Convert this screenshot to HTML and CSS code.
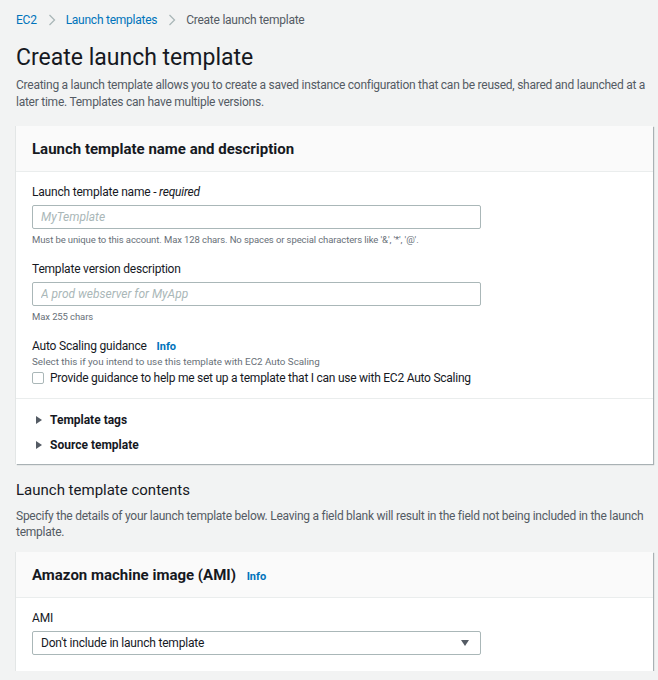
FILE: index.html
```html
<!DOCTYPE html>
<html lang="en">
<head>
    <meta charset="UTF-8" />
    <title>Create launch template</title>
    <link rel="stylesheet" href="styles.css">
</head>
<body>
    <main class="page">
        <nav class="breadcrumbs">
            <a href="#">EC2</a>
            <svg class="crumb-sep" width="8" height="12" viewBox="0 0 8 12"><path d="M1.5 1l5 5-5 5" fill="none" stroke="#aab7b8" stroke-width="1.3"/></svg>
            <a href="#">Launch templates</a>
            <svg class="crumb-sep" width="8" height="12" viewBox="0 0 8 12"><path d="M1.5 1l5 5-5 5" fill="none" stroke="#aab7b8" stroke-width="1.3"/></svg>
            <span class="crumb-current">Create launch template</span>
        </nav>

        <h1 class="page-title">Create launch template</h1>
        <p class="page-desc">Creating a launch template allows you to create a saved instance configuration that can be reused, shared and launched at a later time. Templates can have multiple versions.</p>

        <section class="card">
            <div class="card-header">
                <h2>Launch template name and description</h2>
            </div>
            <div class="card-body">
                <div class="field">
                    <label class="field-label">Launch template name - <i>required</i></label>
                    <input class="text-input" type="text" placeholder="MyTemplate">
                    <div class="field-hint">Must be unique to this account. Max 128 chars. No spaces or special characters like '&amp;', '*', '@'.</div>
                </div>
                <div class="field">
                    <label class="field-label">Template version description</label>
                    <input class="text-input" type="text" placeholder="A prod webserver for MyApp">
                    <div class="field-hint">Max 255 chars</div>
                </div>
                <div class="field field-last">
                    <label class="field-label">Auto Scaling guidance <a class="info" href="#">Info</a></label>
                    <div class="field-hint hint-top">Select this if you intend to use this template with EC2 Auto Scaling</div>
                    <label class="checkbox-row">
                        <span class="checkbox"></span>
                        Provide guidance to help me set up a template that I can use with EC2 Auto Scaling
                    </label>
                </div>
            </div>
            <div class="card-expanders">
                <div class="expander"><span class="caret"></span>Template tags</div>
                <div class="expander"><span class="caret"></span>Source template</div>
            </div>
        </section>

        <h3 class="section-title">Launch template contents</h3>
        <p class="section-desc">Specify the details of your launch template below. Leaving a field blank will result in the field not being included in the launch template.</p>

        <section class="card">
            <div class="card-header">
                <h2>Amazon machine image (AMI) <a class="info" href="#">Info</a></h2>
            </div>
            <div class="card-body body-short">
                <label class="field-label">AMI</label>
                <div class="select">
                    <span>Don't include in launch template</span>
                    <span class="select-arrow"></span>
                </div>
            </div>
        </section>
    </main>
</body>
</html>
```

FILE: styles.css
```css
* {
    margin: 0;
    padding: 0;
    box-sizing: border-box;
}

body {
    font-family: Roboto, 'Noto Sans', sans-serif;
    background-color: #f2f3f3;
    color: #16191f;
}

.page {
    padding: 11px 0 0 16px;
    width: 658px;
}

.breadcrumbs {
    display: flex;
    align-items: center;
    font-size: 12px;
    letter-spacing: -0.25px;
    height: 18px;
}

.breadcrumbs a {
    color: #0073bb;
    text-decoration: none;
}

.crumb-sep {
    margin: 0 10px 0 11px;
}

.crumb-current {
    color: #545b64;
}

.page-title {
    font-size: 23px;
    font-weight: 400;
    margin-top: 13px;
    line-height: 32px;
}

.page-desc,
.section-desc {
    font-size: 12px;
    letter-spacing: -0.25px;
    color: #545b64;
    line-height: 17px;
    margin-top: 3px;
    width: 642px;
}

.card {
    width: 637px;
    background: #fff;
    margin-top: 15px;
    box-shadow: 1px 1px 1px 0 rgba(0, 28, 36, 0.3), -1px 0 0 0 rgba(0, 28, 36, 0.06);
}

.card-header {
    background: #fafafa;
    border-bottom: 1px solid #eaeded;
    padding: 0 16px;
    height: 46px;
    display: flex;
    align-items: center;
}

.card-header h2 {
    font-size: 15px;
    font-weight: 700;
}

.info {
    color: #0073bb;
    font-size: 11px;
    font-weight: 700;
    letter-spacing: 0;
    text-decoration: none;
    margin-left: 7px;
}

.card-body {
    padding: 12px 16px 11px;
    border-bottom: 1px solid #eaeded;
}

.field {
    margin-bottom: 15px;
}

.field-last {
    margin-bottom: 0;
}

.field-label {
    display: block;
    font-size: 12px;
    letter-spacing: -0.2px;
    line-height: 16px;
    margin-bottom: 5px;
}

.text-input {
    display: block;
    width: 449px;
    height: 24px;
    border: 1px solid #aab7b8;
    border-radius: 2px;
    padding: 0 8px;
    font-family: inherit;
    font-size: 12px;
}

.text-input::placeholder {
    color: #aab7b8;
    font-style: italic;
}

.field-hint {
    font-size: 9.5px;
    letter-spacing: -0.1px;
    color: #687078;
    margin-top: 4px;
    line-height: 13px;
}

.hint-top {
    margin-top: -5px;
    font-size: 9.8px;
    letter-spacing: 0;
}

.checkbox-row {
    display: flex;
    align-items: center;
    font-size: 12px;
    letter-spacing: -0.25px;
    margin-top: 1px;
    line-height: 18px;
}

.checkbox {
    width: 12px;
    height: 12px;
    border: 1px solid #aab7b8;
    border-radius: 2px;
    margin-right: 6px;
}

.card-expanders {
    padding: 8px 16px 7px 20px;
}

.expander {
    display: flex;
    align-items: center;
    font-size: 12px;
    font-weight: 700;
    color: #16191f;
    height: 25px;
}

.caret {
    width: 0;
    height: 0;
    border-top: 4px solid transparent;
    border-bottom: 4px solid transparent;
    border-left: 6px solid #545b64;
    margin-right: 8px;
}

.section-title {
    font-size: 15px;
    font-weight: 400;
    margin-top: 17px;
}

.section-desc {
    margin-top: 9px;
    line-height: 16px;
}

.section-desc + .card {
    margin-top: 12px;
}

.body-short {
    border-bottom: none;
    padding: 12px 16px 16px;
}

.select {
    width: 449px;
    height: 24px;
    border: 1px solid #aab7b8;
    border-radius: 2px;
    padding: 0 8px;
    display: flex;
    align-items: center;
    justify-content: space-between;
    font-size: 12px;
    letter-spacing: -0.2px;
}

.select-arrow {
    width: 0;
    height: 0;
    border-left: 4px solid transparent;
    border-right: 4px solid transparent;
    border-top: 6px solid #545b64;
    margin-right: 3px;
}
```
